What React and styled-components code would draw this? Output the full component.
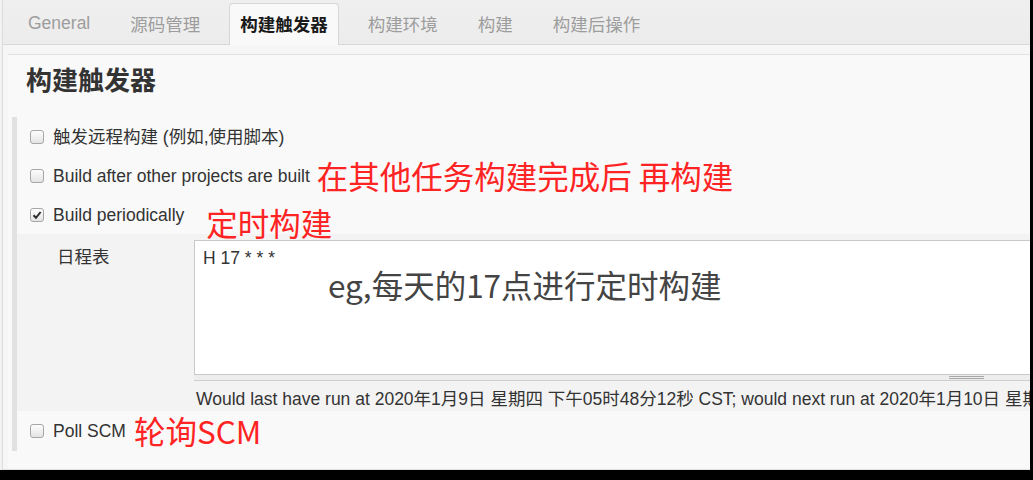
import React from "react";
import styled, { createGlobalStyle } from "styled-components";

const GlobalStyle = createGlobalStyle`
  html, body { margin: 0; padding: 0; background: #000; }
  body { font-family: "Liberation Sans", "Noto Sans CJK SC", sans-serif; }
`;

const Screen = styled.div`
  width: 1030px;
  height: 470px;
  overflow: hidden;
  background: #f2f2f2;
  display: flex;
`;

const Frame = styled.div`
  margin-left: 2px;
  border-left: 1px solid #dcdcdc;
  border-bottom: 1px solid #e0e0e0;
  flex: 1;
  min-width: 0;
  background: #f9f9f9;
  display: flex;
  flex-direction: column;
  overflow: hidden;
`;

const TabBar = styled.div`
  height: 44px;
  border-bottom: 1px solid #d9d9d9;
  background: linear-gradient(#efefef, #ececec);
  display: flex;
  align-items: flex-end;
  gap: 18px;
  padding-left: 14px;
`;

const Tab = styled.div`
  height: 42px;
  box-sizing: border-box;
  margin-bottom: -1px;
  padding: 0 10px 3px;
  border: 1px solid ${(p) => (p.$active ? "#d6d6d6" : "transparent")};
  border-bottom: none;
  border-radius: 4px 4px 0 0;
  background: ${(p) => (p.$active ? "#f9f9f9" : "transparent")};
  color: ${(p) => (p.$active ? "#1a1a1a" : "#9d9d9d")};
  font-weight: ${(p) => (p.$active ? "bold" : "normal")};
  font-size: 17.5px;
  display: flex;
  align-items: center;
  white-space: nowrap;
`;

const Band = styled.div`
  flex: 1;
  min-height: 0;
  padding: 9px 0 0 5px;
  background: #f6f6f6;
  display: flex;
  flex-direction: column;
`;

const Content = styled.div`
  flex: 1;
  border-top: 1px solid #e2e2e2;
  background: #f9f9f9;
  display: flex;
  flex-direction: column;
`;

const Heading = styled.h1`
  margin: 8px 0 0 18px;
  font-size: 26px;
  line-height: 36px;
  font-weight: bold;
  color: #333;
`;

const Panel = styled.div`
  margin: 18px 0 0 4px;
  border-left: 5px solid #e1e1e1;
  display: flex;
  flex-direction: column;
`;

const Row = styled.div`
  height: ${(p) => p.$h || 39}px;
  display: flex;
  align-items: center;
  padding-left: 13px;
`;

const Box = styled.span`
  width: 14px;
  height: 14px;
  box-sizing: border-box;
  border: 1px solid #a6a6a6;
  border-radius: 3px;
  background: linear-gradient(#fdfdfd, #e4e4e4);
  display: inline-flex;
  align-items: center;
  justify-content: center;
  flex-shrink: 0;
  margin-right: 9px;
`;

const Label = styled.span`
  font-size: 17.5px;
  line-height: 24px;
  color: #333;
  white-space: nowrap;
`;

const Note = styled.span`
  position: relative;
  font-family: "Noto Sans CJK SC", sans-serif;
  font-size: 31.5px;
  line-height: 1;
  color: #ff2424;
  margin-left: ${(p) => p.$gap ?? 8}px;
  margin-top: ${(p) => p.$drop ?? 0}px;
  align-self: ${(p) => (p.$drop ? "flex-start" : "center")};
  white-space: nowrap;
`;

const Nested = styled.div`
  background: #f3f3f3;
  padding: 6px 0 0 40px;
  display: grid;
  grid-template-columns: 137px auto;
`;

const FieldName = styled.div`
  margin-top: 5px;
  font-size: 17.5px;
  line-height: 24px;
  color: #333;
`;

const Field = styled.div`
  display: flex;
  flex-direction: column;
`;

const TextBox = styled.div`
  width: 1544px;
  height: 135px;
  box-sizing: border-box;
  border: 1px solid #c9c9c9;
  background: #fff;
  padding: 5px 8px;
`;

const Value = styled.div`
  font-size: 17.5px;
  line-height: 24px;
  color: #333;
`;

const InBoxNote = styled.div`
  margin-left: 125px;
  font-family: "Noto Sans CJK SC", sans-serif;
  font-size: 31.5px;
  line-height: 28px;
  color: #444;
  white-space: nowrap;
`;

const Grip = styled.div`
  width: 1544px;
  height: 6px;
  box-sizing: border-box;
  background: #ededed;
  border-bottom: 1px solid #cfcfcf;
  display: flex;
  flex-direction: column;
  align-items: center;
  justify-content: center;
  gap: 1px;
`;

const GripLine = styled.span`
  width: 35px;
  height: 1px;
  background: #a9a9a9;
`;

const Hint = styled.div`
  margin-top: 6px;
  padding-left: 2px;
  font-size: 17.5px;
  line-height: 24px;
  color: #333;
  white-space: nowrap;
`;

const Check = ({ checked }) => (
  <Box>
    {checked && (
      <svg width="10" height="10" viewBox="0 0 10 10">
        <path d="M1.5 5.2 L4 7.8 L8.6 2" fill="none" stroke="#2b2b2b" strokeWidth="2" />
      </svg>
    )}
  </Box>
);

const tabs = ["General", "源码管理", "构建触发器", "构建环境", "构建", "构建后操作"];

export default function App() {
  return (
    <>
      <GlobalStyle />
      <Screen>
        <Frame>
          <TabBar>
            {tabs.map((t) => (
              <Tab key={t} $active={t === "构建触发器"}>
                {t}
              </Tab>
            ))}
          </TabBar>
          <Band>
            <Content>
              <Heading>构建触发器</Heading>
              <Panel>
                <Row>
                  <Check />
                  <Label>触发远程构建 (例如,使用脚本)</Label>
                </Row>
                <Row>
                  <Check />
                  <Label>Build after other projects are built</Label>
                  <Note $gap={7}>在其他任务构建完成后 再构建</Note>
                </Row>
                <Row>
                  <Check checked />
                  <Label>Build periodically</Label>
                  <Note $gap={22} $drop={12}>定时构建</Note>
                </Row>
                <Nested>
                  <FieldName>日程表</FieldName>
                  <Field>
                    <TextBox>
                      <Value>H 17 * * *</Value>
                      <InBoxNote>eg,每天的17点进行定时构建</InBoxNote>
                    </TextBox>
                    <Grip>
                      <GripLine />
                      <GripLine />
                    </Grip>
                    <Hint>
                      Would last have run at 2020年1月9日 星期四 下午05时48分12秒 CST; would next run at 2020年1月10日 星期五 下午05时48分12秒 CST.
                    </Hint>
                  </Field>
                </Nested>
                <Row $h={40}>
                  <Check />
                  <Label>Poll SCM</Label>
                  <Note $gap={8}>轮询SCM</Note>
                </Row>
              </Panel>
            </Content>
          </Band>
        </Frame>
      </Screen>
    </>
  );
}
